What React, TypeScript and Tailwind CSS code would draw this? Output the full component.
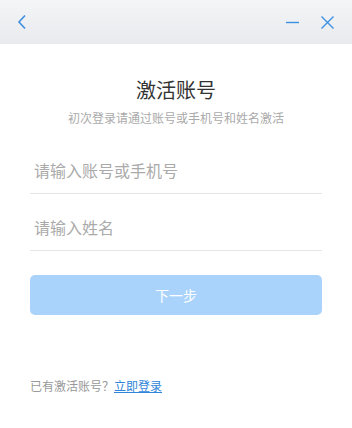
export default function App() {
  return (
    <div
      className="flex h-[428px] w-[352px] flex-col bg-white"
      style={{ fontFamily: '"Noto Sans CJK SC", "Noto Sans", sans-serif' }}
    >
      <div className="flex h-[44px] items-center justify-between bg-gradient-to-b from-[#f4f5f7] to-[#e8eaed] pl-[16px] pr-[18px]">
        <svg width="12" height="16" viewBox="0 0 12 16" fill="none">
          <path d="M9 1.5 L3 8 L9 14.5" stroke="#3d8fe0" strokeWidth="1.6" />
        </svg>
        <div className="flex items-center gap-[22px]">
          <svg width="13" height="13" viewBox="0 0 13 13" fill="none">
            <path d="M0 6.5 H13" stroke="#3d8fe0" strokeWidth="1.4" />
          </svg>
          <svg width="13" height="13" viewBox="0 0 13 13" fill="none">
            <path d="M0.5 0.5 L12.5 12.5 M12.5 0.5 L0.5 12.5" stroke="#3d8fe0" strokeWidth="1.4" />
          </svg>
        </div>
      </div>

      <div className="flex flex-col px-[30px]">
        <h1 className="mt-[32px] text-center text-[20px] leading-[28px] text-[#333]">激活账号</h1>
        <p className="mt-[5px] text-center text-[12px] leading-[18px] text-[#aaa]">
          初次登录请通过账号或手机号和姓名激活
        </p>

        <div className="mt-[20px] flex h-[47px] items-center border-b border-[#e5e5e5] pl-[4px] text-[16px] text-[#aaa]">
          请输入账号或手机号
        </div>
        <div className="mt-[10px] flex h-[47px] items-center border-b border-[#e5e5e5] pl-[4px] text-[16px] text-[#aaa]">
          请输入姓名
        </div>

        <div className="mt-[24px] flex h-[40px] items-center justify-center rounded-[5px] bg-[#a9d3fb] text-[14px] text-white">
          下一步
        </div>

        <div className="mt-[62px] text-[12px] leading-[18px] text-[#999]">
          已有激活账号？<span className="text-[#2f86d8] underline">立即登录</span>
        </div>
      </div>
    </div>
  );
}
